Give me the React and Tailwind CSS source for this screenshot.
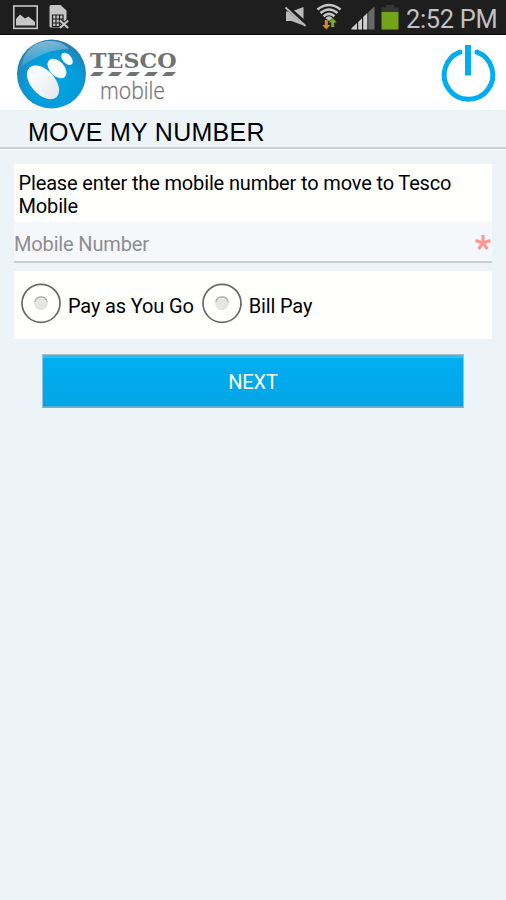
import React from 'react';

function StatusBar() {
  return (
    <div className="flex h-[35px] items-start bg-[#1e1e1e] shadow-[inset_0_-1px_0_#0c0a0a]">
      <svg className="h-[35px] w-[90px]" viewBox="0 0 90 35">
        <rect x="13.8" y="6" width="23.4" height="22.4" fill="none" stroke="#c6c6c6" strokeWidth="1.6" />
        <path d="M16 25.6V19L20 14.5L25 18.5L28.5 16.5L35 22V25.6Z" fill="#c6c6c6" />
        <path d="M51 5H60.5L66.5 10.5V27.5H51Q49.5 27.5 49.5 26V6.5Q49.5 5 51 5Z" fill="#c6c6c6" />
        <path d="M52.5 15H63V26.5H52.5ZM52.5 19H63M52.5 23H63M56 15V26M59.5 15V26" fill="none" stroke="#1e1e1e" strokeWidth="1.2" />
        <path d="M59.8 20.5L68.2 28M68.2 20.5L59.8 28" stroke="#1e1e1e" strokeWidth="4.2" />
        <path d="M59.8 20.5L68.2 28M68.2 20.5L59.8 28" stroke="#c6c6c6" strokeWidth="2.3" />
      </svg>
      <svg className="ml-auto h-[35px] w-[126px]" viewBox="280 0 126 35">
        <path d="M286 11.5H291.5L303.5 7V25.5L291.5 21H286Z" fill="#b9b9b9" />
        <path d="M286 6.5L306.5 24.5" stroke="#1e1e1e" strokeWidth="4.5" />
        <path d="M285.5 7.5L305.5 26" stroke="#b9b9b9" strokeWidth="1.9" />
        <g fill="none" stroke="#c6c6c6" strokeWidth="2.5">
          <path d="M317.5 9.5Q329 .5 340.5 9.5" />
          <path d="M320.5 13Q329 6 337.5 13" />
          <path d="M323.5 16.3Q329 11.5 334.5 16.3" />
        </g>
        <path d="M325.5 18Q329 14.5 332.5 18L329 21Z" fill="#c6c6c6" />
        <path d="M324.8 20H327.8V25H330.3L326.3 29.5L322.3 25H324.8Z" fill="#d38b32" />
        <path d="M331.2 27H334.2V22.5H336.7L332.7 18L328.7 22.5H331.2Z" fill="#7bad1f" />
        <path d="M351.5 29.5V28.3L357 23V29.5ZM358.2 29.5V21.9L362 18.2V29.5ZM363.2 29.5V17L367.3 13V29.5Z" fill="#cfcfcf" />
        <path d="M368.3 29.5V12L374.5 6.5V29.5Z" fill="#686868" />
        <path d="M386 5H394V7.5H398.5V12.5H381.5V7.5H386Z" fill="#353835" />
        <rect x="381.5" y="12" width="17" height="17.5" fill="#71a31b" />
      </svg>
      <div className="mt-[3px] h-[32px] w-[100px] whitespace-nowrap text-[25.4px] leading-[33px] tracking-[-0.28px] text-[#c2c2c2]">2:52 PM</div>
    </div>
  );
}

function Logo() {
  return (
    <svg className="h-[75px] w-[190px]" viewBox="0 35 190 75">
      <defs>
        <radialGradient id="ball" cx=".52" cy=".6" r=".55">
          <stop offset="0" stopColor="#00a5e3" />
          <stop offset=".7" stopColor="#039cda" />
          <stop offset="1" stopColor="#2583b4" />
        </radialGradient>
        <linearGradient id="gloss" x1="0" y1="0" x2=".3" y2="1">
          <stop offset="0" stopColor="#fff" stopOpacity=".5" />
          <stop offset="1" stopColor="#fff" stopOpacity=".05" />
        </linearGradient>
        <linearGradient id="oval" x1="0" y1="0" x2="1" y2="0">
          <stop offset="0" stopColor="#fff" />
          <stop offset="1" stopColor="#e6eaee" />
        </linearGradient>
      </defs>
      <circle cx="51.5" cy="74" r="34.5" fill="url(#ball)" />
      <path d="M20.5 68C24 48 38 40 52 41C60 41.5 66 45 69 49C50 49 34 57 20.5 68Z" fill="url(#gloss)" />
      <ellipse cx="43" cy="82.3" rx="20" ry="12" transform="rotate(48 43 82.3)" fill="url(#oval)" />
      <ellipse cx="57" cy="68.5" rx="11.5" ry="7.3" transform="rotate(48 57 68.5)" fill="#fff" />
      <ellipse cx="67" cy="58.9" rx="7.2" ry="4.4" transform="rotate(49 67 58.9)" fill="#f5fbfe" />
      <text x="90" y="67.7" fontSize="20.5" fontWeight="bold" textLength="86.5" lengthAdjust="spacingAndGlyphs" fill="#717275" style={{ fontFamily: '"DejaVu Serif", serif' }}>TESCO</text>
      <path d="M94 72H104L100 76H90ZM112 72H122L118 76H108ZM130 72H140L136 76H126ZM148 72H158L154 76H144ZM166 72H176L172 76H162Z" fill="#717275" />
      <text x="100" y="98.5" fontSize="24" textLength="65" lengthAdjust="spacingAndGlyphs" fill="#77787b" stroke="#77787b" strokeWidth=".35" style={{ fontFamily: '"Open Sans", sans-serif', fontWeight: 300 }}>mobile</text>
    </svg>
  );
}

function Radio({ label }) {
  return (
    <label className="flex items-center">
      <svg className="mr-[6px] size-[42px]" viewBox="0 0 42 42">
        <circle cx="21" cy="21.3" r="19" fill="#fffffd" stroke="#686868" strokeWidth="1.7" />
        <circle cx="21" cy="21.3" r="6.3" fill="#e5e5e5" stroke="#d8d8d8" strokeWidth=".7" />
        <path d="M14.8 20A6.3 6.3 0 0 1 27.2 20" fill="none" stroke="#aaa" strokeWidth="1.2" />
      </svg>
      <span className="mt-[5px] whitespace-nowrap">{label}</span>
    </label>
  );
}

export default function App() {
  return (
    <div className="h-[900px] w-[506px] overflow-hidden bg-[#ecf4f8] font-[Roboto,sans-serif] text-[20px] text-black">
      <StatusBar />
      <header className="flex h-[75px] justify-between bg-white">
        <Logo />
        <svg className="h-[75px] w-[76px]" viewBox="430 35 76 75">
          <path d="M460 52.2A24.3 24.3 0 1 0 477 52.2" fill="none" stroke="#00aeef" strokeWidth="5" strokeLinecap="round" />
          <path d="M468 45V75.5" stroke="#00aeef" strokeWidth="6" />
        </svg>
      </header>
      <h1 className="h-[39px] border-b-2 border-[#cbd2d6] pl-[28px] font-['Liberation_Sans',sans-serif] text-[25px] leading-[44px] tracking-[0.28px] shadow-[0_1px_0_#fff]">MOVE MY NUMBER</h1>
      <main className="px-[14px] pt-[15px] tracking-[-0.15px]">
        <p className="h-[58px] bg-[#fffffd] pl-[4.5px] pt-[7.5px] leading-[23px]">Please enter the mobile number to move to Tesco<br />Mobile</p>
        <div className="flex h-[41px] items-center justify-between border-b-2 border-[#cbcdd0] bg-[#f6f7fa] text-[#8d8e90]">
          <span className="mt-[5px]">Mobile Number</span>
          <svg className="h-[20px] w-[18px]" viewBox="0 0 18 20">
            <path d="M9 11V3M9 11L1.5 8.5M9 11L16.5 8.5M9 11L4.5 17M9 11L13.5 17" stroke="#fb9696" strokeWidth="3" />
          </svg>
        </div>
        <div className="mt-[8px] flex h-[68px] bg-[#fffffd] pl-[6px] pt-[11px]">
          <div className="flex h-[42px] gap-[7px]">
            <Radio label="Pay as You Go" />
            <Radio label="Bill Pay" />
          </div>
        </div>
        <button className="ml-[28px] mt-[15px] block h-[54px] w-[422px] border border-x-[#8ac7e6] border-b-[#83abbc] border-t-[#a9bfc8] bg-linear-to-b from-[#00aff2] to-[#04a5e5] pt-px text-center text-white shadow-[inset_0_3px_0_#32bdf0,inset_0_-1px_0_#5eabc9]">NEXT</button>
      </main>
    </div>
  );
}
